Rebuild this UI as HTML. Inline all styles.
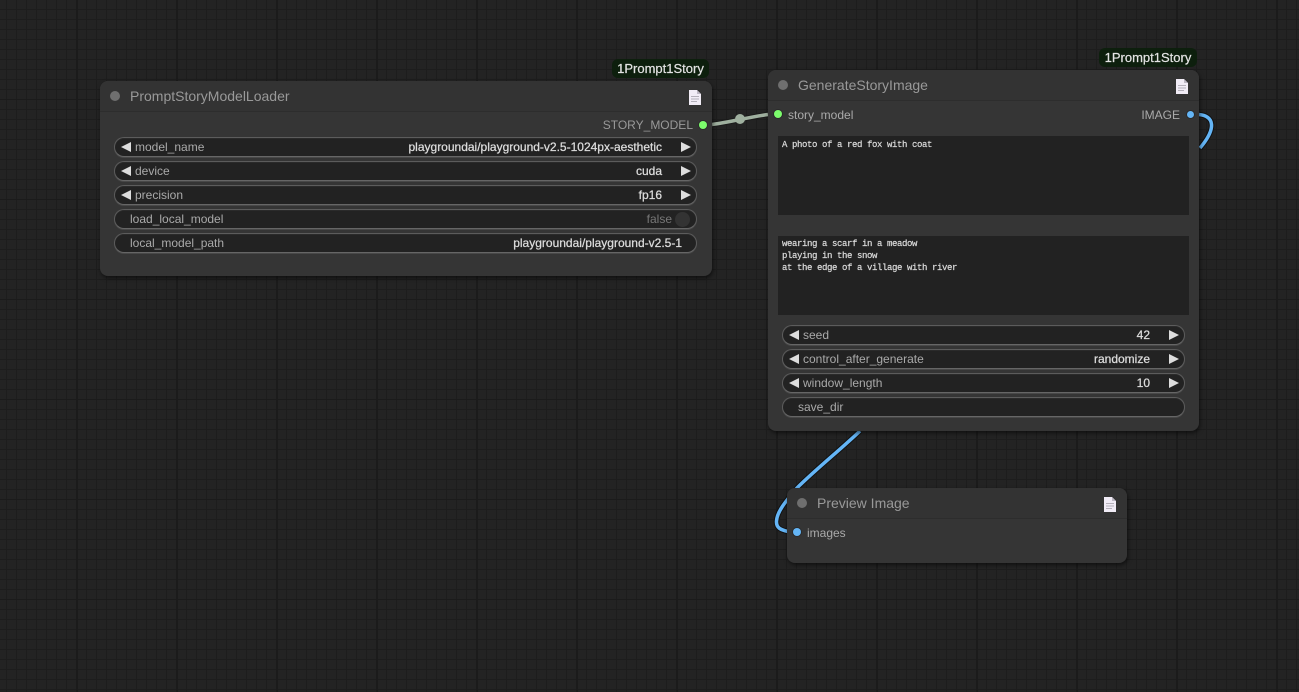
<!DOCTYPE html>
<html><head><meta charset="utf-8"><style>
html,body{margin:0;padding:0;background:#222;}
#c{position:relative;width:1299px;height:692px;overflow:hidden;font-family:"Liberation Sans",sans-serif;font-size:12px;color:#aaa;background:#222;}
#bg{position:absolute;left:0;top:0;}
.n{position:absolute;background:#353535;border-radius:8px;box-shadow:1px 2px 4px rgba(0,0,0,.55);}
.h{position:absolute;left:0;right:0;top:0;height:30px;background:#333;border-radius:8px 8px 0 0;border-bottom:1px solid #2d2d2d;}
.dot{position:absolute;width:10px;height:10px;border-radius:50%;background:#6f6f6f;}
.t{position:absolute;white-space:pre;line-height:14px;}
.title{font-size:14px;color:#999;line-height:16px;}
.w{position:absolute;height:18px;background:#222;border:1px solid #5c5c5c;border-bottom-color:#666;border-radius:10px;box-shadow:0 1px 0 #484848,inset 0 1px 0 #2a2a2a;}
.w .l{position:absolute;top:2px;line-height:14px;color:#aaa;white-space:pre;}
.w .v{position:absolute;top:2px;line-height:14px;color:#ddd;white-space:pre;text-align:right;-webkit-text-stroke:.25px #ddd;}
.al,.ar{position:absolute;top:4px;width:0;height:0;border-top:5px solid transparent;border-bottom:5px solid transparent;}
.al{left:6px;border-right:10px solid #ddd;}
.ar{right:5px;border-left:10px solid #ddd;}
.s{position:absolute;width:8px;height:8px;border-radius:50%;}
.g{background:#7cfc6c;box-shadow:0 0 0 1px #2a2a2a;}
.b{background:#64b5f6;box-shadow:0 0 0 1px #2a2a2a;}
.ta{position:absolute;background:#222;font-family:"Liberation Mono",monospace;font-size:9px;letter-spacing:-.4px;line-height:12px;color:#ddd;padding:3px 4px;box-sizing:border-box;white-space:pre;-webkit-text-stroke:.2px #ddd;}
.badge{position:absolute;background:#0d1f0d;border-radius:6px;color:#e4e4e4;font-size:13px;line-height:19px;text-align:center;height:19px;-webkit-text-stroke:.2px #e4e4e4;}
.ic{position:absolute;}
</style></head><body><div id="c">
<svg id="bg" width="1299" height="692">
<defs>
<pattern id="m" x="6" y="9" width="10" height="10" patternUnits="userSpaceOnUse"><path d="M.5 0V10M0 .5H10" stroke="#1d1d1d" stroke-width="1" fill="none"/></pattern>
<pattern id="M" x="76" y="99" width="100" height="100" patternUnits="userSpaceOnUse"><path d="M1 0V100" stroke="#1b1b1b" stroke-width="2" fill="none"/><path d="M0 .5H100" stroke="#1b1b1b" stroke-width="1" fill="none"/></pattern>
</defs>
<rect width="1299" height="692" fill="#232323"/>
<rect width="1299" height="692" fill="url(#m)"/>
<rect width="1299" height="692" fill="url(#M)"/>
<path d="M712 124.500C730 122 750 117 768 114.500" stroke="#1a1a1a" stroke-width="5.500" fill="none"/>
<path d="M712 124.500C730 122 750 117 768 114.500" stroke="#9fb09f" stroke-width="3.500" fill="none"/>
<circle cx="740" cy="119" r="5" fill="#9fb09f"/>
<path d="M1199 114.500C1214 116 1217 128 1200 148" stroke="#111" stroke-width="5.500" fill="none"/>
<path d="M1199 114.500C1214 116 1217 128 1200 148" stroke="#64b5f6" stroke-width="3.500" fill="none"/>
<path d="M860 431C840 450 815 470 797 488C785 502 777 512 776.500 521C776 528 781 530 788 531.500" stroke="#111" stroke-width="5.500" fill="none"/>
<path d="M860 431C840 450 815 470 797 488C785 502 777 512 776.500 521C776 528 781 530 788 531.500" stroke="#64b5f6" stroke-width="3.500" fill="none"/>
</svg>

<div class="badge" style="left:612px;top:59px;width:97px;">1Prompt1Story</div>
<div class="badge" style="left:1099px;top:48px;width:98px;">1Prompt1Story</div>

<!-- Node 1 -->
<div class="n" style="left:100px;top:81px;width:612px;height:195px;">
<div class="h"></div>
<div class="dot" style="left:10px;top:10px;"></div>
<div class="t title" style="left:30px;top:7px;">PromptStoryModelLoader</div>
<svg class="ic" style="left:588px;top:8px;" width="14" height="17" viewBox="0 0 14 17"><path d="M1 1H9L13 5V16H1Z" fill="#f1ecf6"/><path d="M9 1V5H13" fill="#bdb8c4"/><path d="M3 7.500H11M3 10H11M3 12.500H9" stroke="#b4b0ba" stroke-width="1"/></svg>
<div class="t" style="right:19px;top:37px;color:#999;">STORY_MODEL</div>
<div class="s g" style="left:599px;top:40px;"></div>
<div class="w" style="left:14px;top:56px;width:581px;"><div class="al"></div><div class="l" style="left:20px;">model_name</div><div class="v" style="right:34px;">playgroundai/playground-v2.5-1024px-aesthetic</div><div class="ar"></div></div>
<div class="w" style="left:14px;top:80px;width:581px;"><div class="al"></div><div class="l" style="left:20px;">device</div><div class="v" style="right:34px;">cuda</div><div class="ar"></div></div>
<div class="w" style="left:14px;top:104px;width:581px;"><div class="al"></div><div class="l" style="left:20px;">precision</div><div class="v" style="right:34px;">fp16</div><div class="ar"></div></div>
<div class="w" style="left:14px;top:128px;width:581px;"><div class="l" style="left:15px;">load_local_model</div><div class="v" style="right:24px;color:#777;-webkit-text-stroke:0;">false</div><div style="position:absolute;right:6px;top:2px;width:15px;height:15px;border-radius:50%;background:#333;"></div></div>
<div class="w" style="left:14px;top:152px;width:581px;"><div class="l" style="left:15px;">local_model_path</div><div class="v" style="right:14px;">playgroundai/playground-v2.5-1</div></div>
</div>

<!-- Node 2 -->
<div class="n" style="left:768px;top:70px;width:431px;height:361px;">
<div class="h"></div>
<div class="dot" style="left:10px;top:10px;"></div>
<div class="t title" style="left:30px;top:7px;">GenerateStoryImage</div>
<svg class="ic" style="left:407px;top:8px;" width="14" height="17" viewBox="0 0 14 17"><path d="M1 1H9L13 5V16H1Z" fill="#f1ecf6"/><path d="M9 1V5H13" fill="#bdb8c4"/><path d="M3 7.500H11M3 10H11M3 12.500H9" stroke="#b4b0ba" stroke-width="1"/></svg>
<div class="s g" style="left:6px;top:40px;"></div>
<div class="t" style="left:20px;top:38px;">story_model</div>
<div class="t" style="right:19px;top:38px;">IMAGE</div>
<div class="s b" style="left:419px;top:41px;width:7px;height:7px;"></div>
<div class="ta" style="left:10px;top:66px;width:411px;height:79px;">A photo of a red fox with coat</div>
<div class="ta" style="left:10px;top:166px;width:411px;height:79px;padding-top:2px;">wearing a scarf in a meadow
playing in the snow
at the edge of a village with river</div>
<div class="w" style="left:14px;top:255px;width:401px;"><div class="al"></div><div class="l" style="left:20px;">seed</div><div class="v" style="right:34px;">42</div><div class="ar"></div></div>
<div class="w" style="left:14px;top:279px;width:401px;"><div class="al"></div><div class="l" style="left:20px;">control_after_generate</div><div class="v" style="right:34px;">randomize</div><div class="ar"></div></div>
<div class="w" style="left:14px;top:303px;width:401px;"><div class="al"></div><div class="l" style="left:20px;">window_length</div><div class="v" style="right:34px;">10</div><div class="ar"></div></div>
<div class="w" style="left:14px;top:327px;width:401px;"><div class="l" style="left:15px;">save_dir</div></div>
</div>

<!-- Node 3 -->
<div class="n" style="left:787px;top:488px;width:340px;height:75px;">
<div class="h"></div>
<div class="dot" style="left:10px;top:10px;"></div>
<div class="t title" style="left:30px;top:7px;">Preview Image</div>
<svg class="ic" style="left:316px;top:8px;" width="14" height="17" viewBox="0 0 14 17"><path d="M1 1H9L13 5V16H1Z" fill="#f1ecf6"/><path d="M9 1V5H13" fill="#bdb8c4"/><path d="M3 7.500H11M3 10H11M3 12.500H9" stroke="#b4b0ba" stroke-width="1"/></svg>
<div class="s b" style="left:6px;top:40px;"></div>
<div class="t" style="left:20px;top:38px;">images</div>
</div>
</div></body></html>
